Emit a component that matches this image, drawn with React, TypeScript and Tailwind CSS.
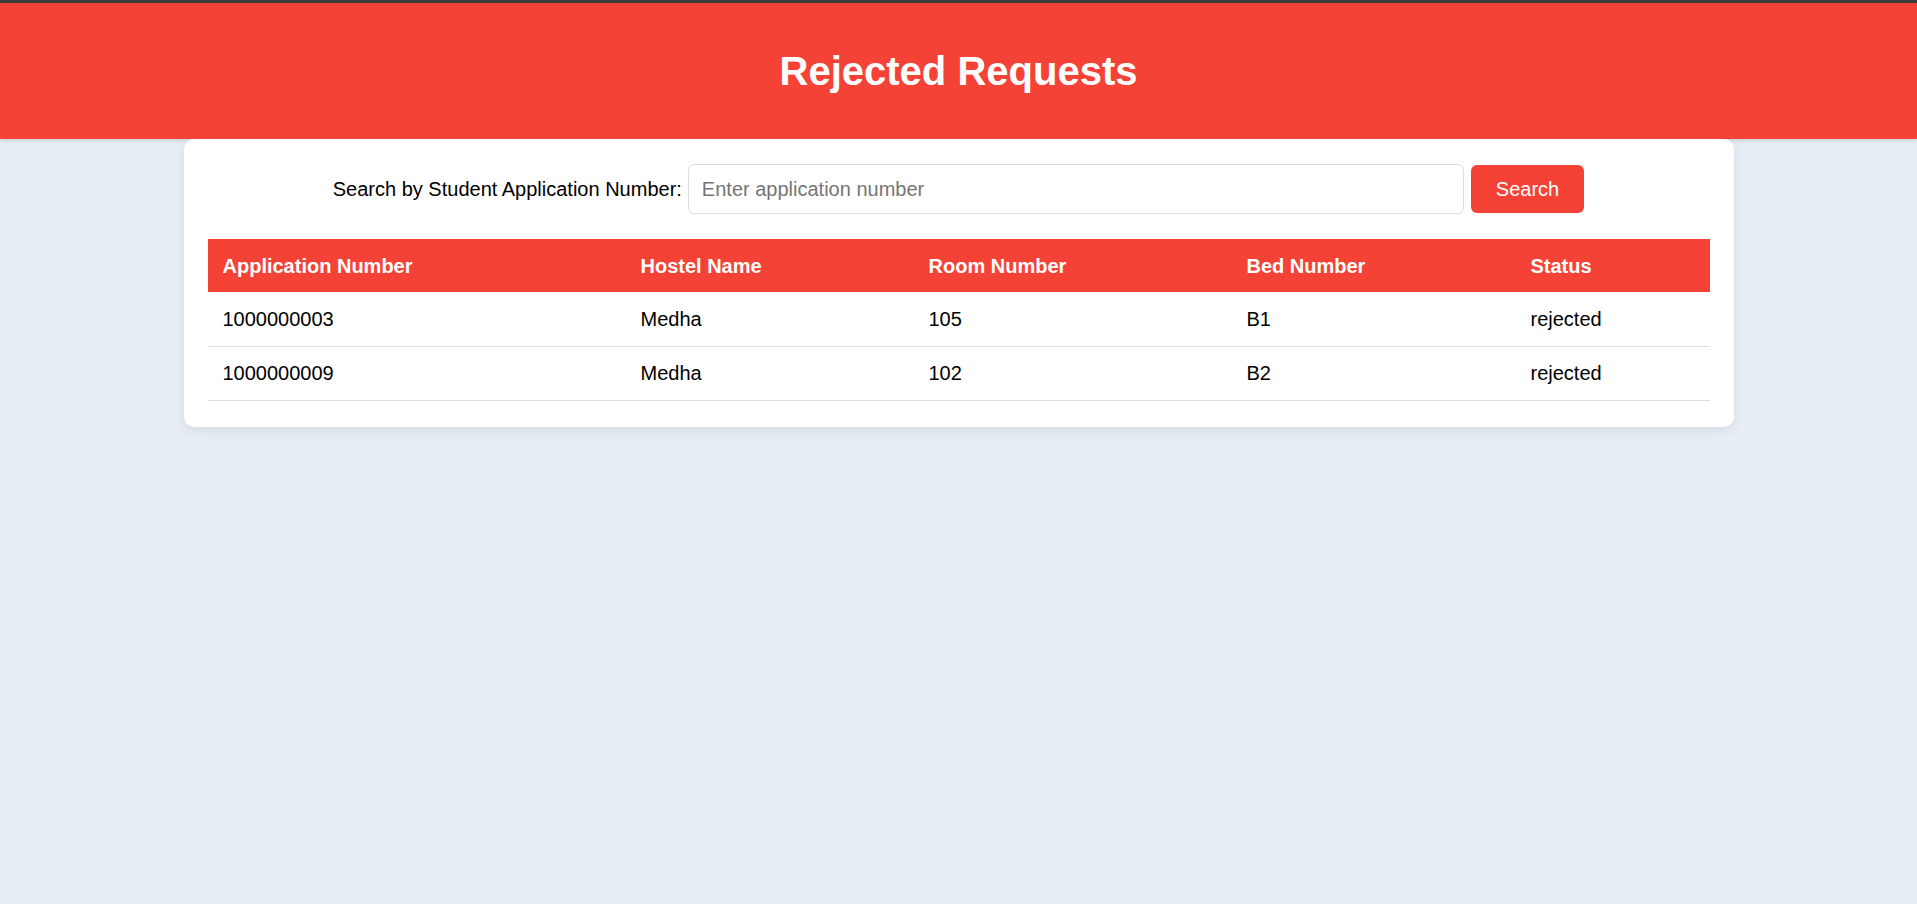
import { useState } from "react";

type Request = {
  applicationNumber: string;
  hostelName: string;
  roomNumber: string;
  bedNumber: string;
  status: string;
};

const requests: Request[] = [
  { applicationNumber: "1000000003", hostelName: "Medha", roomNumber: "105", bedNumber: "B1", status: "rejected" },
  { applicationNumber: "1000000009", hostelName: "Medha", roomNumber: "102", bedNumber: "B2", status: "rejected" },
];

const columns = [
  { label: "Application Number", width: "w-[418px]" },
  { label: "Hostel Name", width: "w-[288px]" },
  { label: "Room Number", width: "w-[318px]" },
  { label: "Bed Number", width: "w-[284px]" },
  { label: "Status", width: "" },
];

export default function App() {
  const [query, setQuery] = useState("");

  return (
    <div className="min-h-screen bg-[#e7eef6] font-['Liberation_Sans',Arial,sans-serif] text-black">
      <div className="h-[3px] bg-[#3b3b3b]" />
      <header className="flex h-[136px] items-center justify-center bg-[#f44336] shadow-[0_2px_4px_rgba(0,0,0,0.12)]">
        <h1 className="text-[40px] font-bold leading-none text-white">Rejected Requests</h1>
      </header>

      <div className="mx-auto w-[1550px] rounded-[10px] bg-white px-6 pb-[26px] pt-[25px] shadow-[0_4px_12px_rgba(0,0,0,0.08)]">
        <div className="mb-[25px] flex items-center justify-center">
          <label className="mr-[6px] text-[20px]">Search by Student Application Number:</label>
          <input
            value={query}
            onChange={(e) => setQuery(e.target.value)}
            placeholder="Enter application number"
            className="h-[50px] w-[776px] rounded-[6px] border border-[#dcdcdc] px-[13px] text-[20px] outline-none placeholder:text-[#757575]"
          />
          <button className="ml-[7px] h-[48px] rounded-[6px] bg-[#f44336] px-[25px] text-[20px] text-white">
            Search
          </button>
        </div>

        <table className="w-full border-collapse text-left text-[20px]">
          <thead>
            <tr className="h-[53px] bg-[#f44336] text-white">
              {columns.map((c) => (
                <th key={c.label} className={`${c.width} px-[15px] font-bold`}>
                  {c.label}
                </th>
              ))}
            </tr>
          </thead>
          <tbody>
            {requests.map((r) => (
              <tr key={r.applicationNumber} className="h-[54px] border-b border-[#dddddd]">
                <td className="px-[15px]">{r.applicationNumber}</td>
                <td className="px-[15px]">{r.hostelName}</td>
                <td className="px-[15px]">{r.roomNumber}</td>
                <td className="px-[15px]">{r.bedNumber}</td>
                <td className="px-[15px]">{r.status}</td>
              </tr>
            ))}
          </tbody>
        </table>
      </div>
    </div>
  );
}
